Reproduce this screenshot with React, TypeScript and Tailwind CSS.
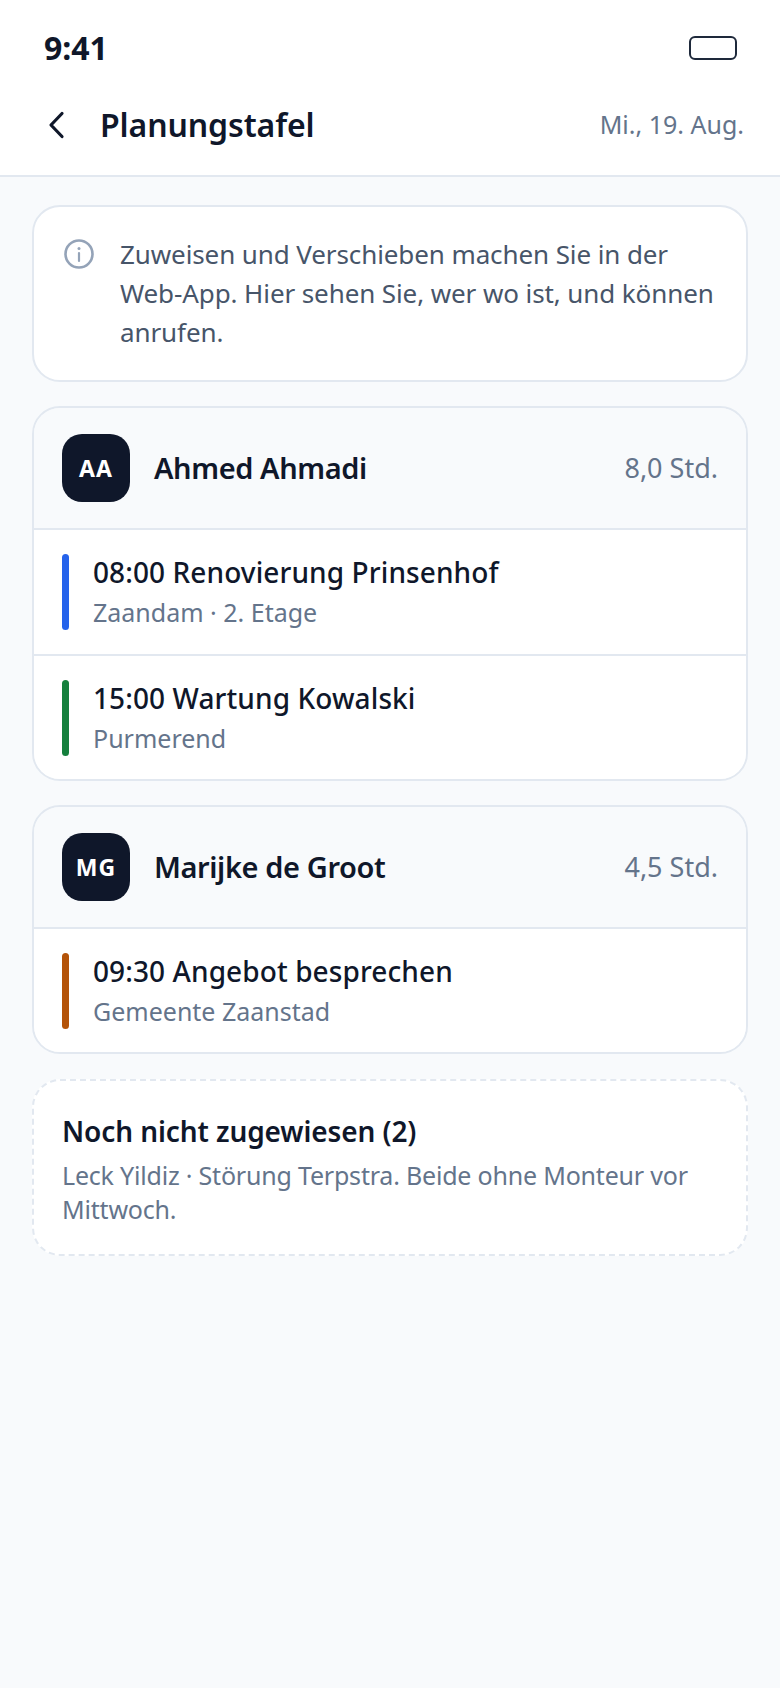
const font = "font-['Noto_Sans',sans-serif]";

function Avatar({ initials }: { initials: string }) {
  return (
    <div className="flex h-[68px] w-[68px] shrink-0 items-center justify-center rounded-[20px] bg-[#0f172a] text-[23px] font-bold tracking-[1px] text-white">
      {initials}
    </div>
  );
}

function Job({ color, title, sub, last }: { color: string; title: string; sub: string; last?: boolean }) {
  return (
    <div className={`flex gap-6 bg-white px-7 pt-6 ${last ? "pb-[23px]" : "border-b-2 border-[#e2e8f0] pb-6"}`}>
      <div className={`w-[7px] shrink-0 rounded-full ${color}`} />
      <div>
        <div className="text-[28px] leading-[36px] font-medium tracking-[0.1px] text-[#0f172a]">{title}</div>
        <div className="mt-1 text-[25px] leading-[36px] text-[#64748b]">{sub}</div>
      </div>
    </div>
  );
}

function Person({ initials, name, hours, children }: { initials: string; name: string; hours: string; children: React.ReactNode }) {
  return (
    <section className="overflow-hidden rounded-[28px] border-2 border-[#e2e8f0]">
      <div className="flex items-center gap-6 border-b-2 border-[#e2e8f0] bg-[#f8fafc] px-7 pt-[26px] pb-[26px]">
        <Avatar initials={initials} />
        <div className="flex-1 text-[29px] font-semibold tracking-[-0.4px] text-[#0f172a]">{name}</div>
        <div className="text-[27px] text-[#64748b]">{hours}</div>
      </div>
      {children}
    </section>
  );
}

export default function App() {
  return (
    <div className={`${font} flex min-h-[1688px] flex-col bg-[#f8fafc]`}>
      <div className="bg-white">
        <div className="flex h-[96px] items-center justify-between pr-[43px] pl-11">
          <span className="text-[32px] font-bold text-[#0f172a]">9:41</span>
          <div className="h-6 w-12 rounded-[6px] border-2 border-[#1e293b]" />
        </div>
        <header className="flex h-[81px] items-center border-b-2 border-[#e2e8f0] pr-9 pb-[21px] pl-11">
          <svg width="24" height="30" viewBox="0 0 24 30" fill="none" className="text-[#0f172a]">
            <path d="M18 3.5 7 15l11 11.5" stroke="currentColor" strokeWidth="3.2" strokeLinecap="round" strokeLinejoin="round" />
          </svg>
          <h1 className="ml-8 flex-1 text-[32px] font-semibold tracking-[-0.1px] text-[#0f172a]">Planungstafel</h1>
          <span className="text-[25px] text-[#64748b]">Mi., 19. Aug.</span>
        </header>
      </div>
      <main className="flex flex-col gap-6 px-8 pt-7">
        <div className="flex gap-[26px] rounded-[28px] border-2 border-[#e2e8f0] bg-white py-[28px] pr-6 pl-[30px]">
          <svg width="30" height="30" viewBox="0 0 30 30" fill="none" className="mt-1 shrink-0 text-[#94a3b8]">
            <circle cx="15" cy="15" r="13.5" stroke="currentColor" strokeWidth="2.6" />
            <path d="M15 14v8" stroke="currentColor" strokeWidth="2.2" strokeLinecap="round" />
            <circle cx="15" cy="9.5" r="1.5" fill="currentColor" />
          </svg>
          <p className="text-[26px] leading-[39px] tracking-[-0.1px] text-[#475569]">
            Zuweisen und Verschieben machen Sie in der Web-App. Hier sehen Sie, wer wo ist, und können anrufen.
          </p>
        </div>
        <Person initials="AA" name="Ahmed Ahmadi" hours="8,0 Std.">
          <Job color="bg-[#2563eb]" title="08:00 Renovierung Prinsenhof" sub="Zaandam · 2. Etage" />
          <Job color="bg-[#15803d]" title="15:00 Wartung Kowalski" sub="Purmerend" last />
        </Person>
        <Person initials="MG" name="Marijke de Groot" hours="4,5 Std.">
          <Job color="bg-[#b45309]" title="09:30 Angebot besprechen" sub="Gemeente Zaanstad" last />
        </Person>
        <div className="mt-px rounded-[28px] border-2 border-dashed border-[#e2e8f0] bg-white px-7 pt-[30px] pb-[28px]">
          <div className="text-[28px] leading-[40px] font-semibold tracking-[-0.1px] text-[#0f172a]">Noch nicht zugewiesen (2)</div>
          <p className="mt-[7px] text-[25px] leading-[34px] tracking-[-0.2px] text-[#64748b]">
            Leck Yildiz · Störung Terpstra. Beide ohne Monteur vor Mittwoch.
          </p>
        </div>
      </main>
    </div>
  );
}
